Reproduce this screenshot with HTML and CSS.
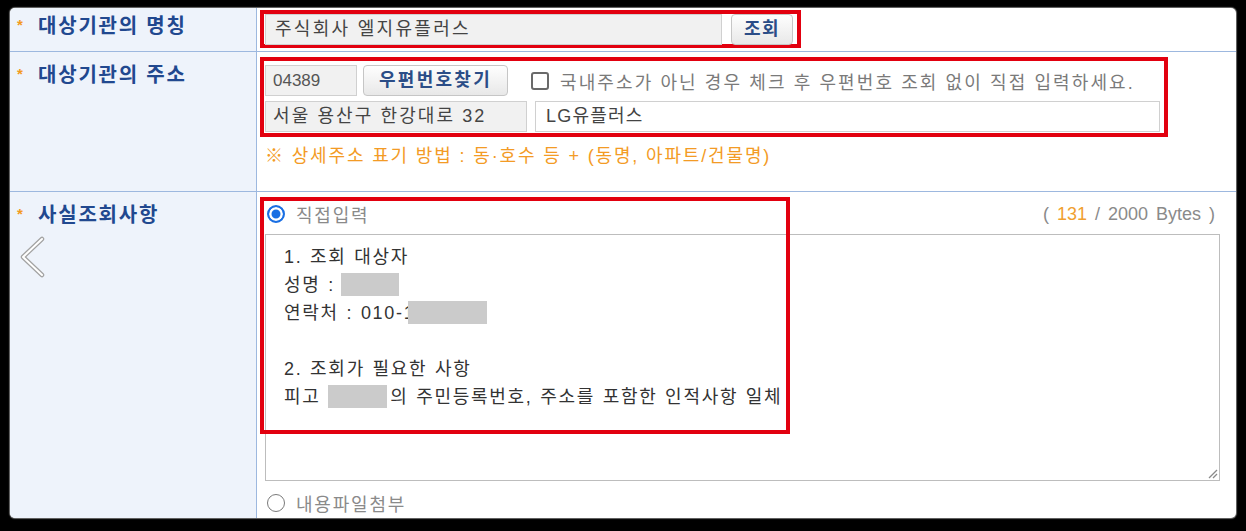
FILE: index.html
```html
<!DOCTYPE html>
<html lang="ko">
<head>
<meta charset="utf-8">
<title>사실조회</title>
<link rel="stylesheet" href="styles.css">
</head>
<body>
<div class="frame">
  <div class="row row-name">
    <div class="th th-name"><span class="star">*</span>대상기관의 명칭</div>
    <div class="td td-name">
      <div class="hl hl-name">
        <div class="inp inp-name">주식회사 엘지유플러스</div>
        <button class="btn btn-search">조회</button>
      </div>
    </div>
  </div>

  <div class="row row-addr">
    <div class="th"><span class="star">*</span>대상기관의 주소</div>
    <div class="td td-addr">
      <div class="hl hl-addr">
        <div class="line">
          <div class="inp inp-zip">04389</div>
          <button class="btn btn-zip">우편번호찾기</button>
          <span class="chk"></span>
          <span class="chk-label">국내주소가 아닌 경우 체크 후 우편번호 조회 없이 직접 입력하세요.</span>
        </div>
        <div class="line">
          <div class="inp inp-road">서울 용산구 한강대로 32</div>
          <div class="inp inp-detail">LG유플러스</div>
        </div>
      </div>
      <div class="note">※ 상세주소 표기 방법 : 동·호수 등 + (동명, 아파트/건물명)</div>
    </div>
  </div>

  <div class="row row-fact">
    <div class="th">
      <div><span class="star">*</span>사실조회사항</div>
      <svg class="chev" width="30" height="42" viewBox="0 0 30 42">
        <polyline points="24,3 5,21 24,39" fill="none" stroke="#a3a3a3" stroke-width="4.5" stroke-linecap="round" stroke-linejoin="round"/>
        <polyline points="24,3 5,21 24,39" fill="none" stroke="#ffffff" stroke-width="2" stroke-linecap="round" stroke-linejoin="round"/>
      </svg>
    </div>
    <div class="td td-fact">
      <div class="radio-line">
        <span class="radio on"></span>
        <span class="radio-label">직접입력</span>
        <span class="counter">( <b class="count">131</b> / 2000 Bytes )</span>
      </div>
      <div class="ta">
        <div>1. 조회 대상자</div>
        <div>성명 : <span class="redact r-name"></span></div>
        <div>연락처 : 010-1<span class="redact r-tel"></span></div>
        <div>&nbsp;</div>
        <div>2. 조회가 필요한 사항</div>
        <div>피고 <span class="redact r-def"></span>의 주민등록번호, 주소를 포함한 인적사항 일체</div>
        <svg class="grip" width="12" height="12" viewBox="0 0 12 12">
          <line x1="11" y1="3" x2="3" y2="11" stroke="#8a8a8a" stroke-width="1.2"/>
          <line x1="11" y1="7" x2="7" y2="11" stroke="#8a8a8a" stroke-width="1.2"/>
        </svg>
      </div>
      <div class="radio-line radio-line2">
        <span class="radio"></span>
        <span class="radio-label">내용파일첨부</span>
      </div>
      <div class="hl-overlay"></div>
    </div>
  </div>
</div>
</body>
</html>
```

FILE: styles.css
```css
html, body {
  margin: 0;
  padding: 0;
  background: #000;
}

body {
  font-family: "Liberation Sans", "Noto Sans CJK KR", sans-serif;
  height: 531px;
  overflow: hidden;
}

.frame {
  margin: 8px 10px 0 10px;
  width: 1226px;
  height: 510px;
  background: #fff;
  border-radius: 5px;
  overflow: hidden;
  display: flex;
  flex-direction: column;
  box-shadow: 0 0 1px 1px #6c6c6c;
}

.row {
  display: grid;
  grid-template-columns: 247px 1fr;
  border-bottom: 1px solid #9db8df;
  box-sizing: border-box;
}

.row-name { height: 44px; }
.row-addr { height: 140px; }
.row-fact { height: 326px; border-bottom: 0; }

.th {
  background: #eef3fb;
  border-right: 1px solid #9db8df;
  padding: 10px 0 0 7px;
  font-weight: bold;
  font-size: 20px;
  letter-spacing: 1.8px;
  color: #21488f;
  line-height: 26px;
  box-sizing: border-box;
}

.th-name { padding-top: 5px; }

.star {
  display: inline-block;
  width: 21px;
  color: #f39a1d;
  font-size: 15px;
  line-height: 24px;
  vertical-align: top;
  letter-spacing: 0;
}

.chev {
  display: block;
  margin: 8px 0 0 1px;
}

.td {
  position: relative;
  box-sizing: border-box;
}

.td-name { padding: 2px 0 0 3px; }
.td-addr { padding: 5px 0 0 3px; }
.td-fact { padding: 10px 16px 0 8px; }

.hl {
  border: 4px solid #e2000f;
  box-sizing: border-box;
}

.hl-name {
  display: inline-flex;
  align-items: center;
  gap: 9px;
  height: 38px;
  padding: 0 4px 0 1px;
}

.hl-addr {
  width: 908px;
  padding: 4px 4px 1px 1px;
  display: flex;
  flex-direction: column;
  gap: 5px;
}

.line {
  display: flex;
  align-items: center;
}

.inp {
  box-sizing: border-box;
  height: 31px;
  border: 1px solid #d0d0d0;
  background: #f1f1f1;
  font-size: 18px;
  letter-spacing: 2.3px;
  color: #444;
  padding-left: 9px;
  line-height: 29px;
  white-space: nowrap;
}

.inp-name { width: 457px; }
.inp-zip { width: 92px; font-size: 17px; color: #555; padding-left: 7px; letter-spacing: 0; }
.inp-road { width: 262px; padding-left: 7px; letter-spacing: 2.1px; }
.inp-detail { width: 625px; margin-left: 8px; background: #fff; padding-left: 10px; letter-spacing: 1.2px; }

.btn {
  height: 31px;
  box-sizing: border-box;
  border: 1px solid #c6c6c6;
  border-radius: 4px;
  background: linear-gradient(#fefefe, #e8e8e8);
  color: #2b4d87;
  font-weight: bold;
  font-size: 18px;
  font-family: inherit;
  padding: 0;
  letter-spacing: 0.6px;
  line-height: 29px;
}

.btn-search { width: 62px; letter-spacing: 1.5px; }
.btn-zip { width: 145px; margin-left: 6px; letter-spacing: 2.3px; }

.chk {
  width: 18px;
  height: 18px;
  border: 2px solid #6a6a6a;
  border-radius: 3px;
  margin-left: 23px;
  box-sizing: border-box;
  background: #fff;
}

.chk-label {
  margin-left: 11px;
  color: #7a7a7a;
  font-size: 18px;
  letter-spacing: 2.1px;
  white-space: nowrap;
}

.note {
  margin-top: 8px;
  padding-left: 5px;
  color: #f39b25;
  font-size: 18px;
  letter-spacing: 1.85px;
  line-height: 22px;
}

.radio-line {
  display: flex;
  align-items: center;
  height: 24px;
  margin-left: 2px;
}

.radio {
  width: 18px;
  height: 18px;
  border-radius: 50%;
  box-sizing: border-box;
  border: 1.5px solid #7a7a7a;
  background: #fff;
  flex: none;
}

.radio.on {
  border: 2px solid #1a6fe3;
  background: #1a6fe3;
  box-shadow: inset 0 0 0 2.5px #fff;
}

.radio-label {
  margin-left: 11px;
  color: #8a8a8a;
  font-size: 18px;
  letter-spacing: 1.8px;
}

.counter {
  margin-left: auto;
  margin-right: 5px;
  color: #8a8a8a;
  font-size: 18px;
  word-spacing: 3px;
}

.count {
  font-weight: normal;
  color: #f0a030;
}

.ta {
  position: relative;
  margin-top: 8px;
  height: 247px;
  box-sizing: border-box;
  border: 1px solid #bdbdbd;
  padding: 8px 0 0 18px;
  font-size: 18px;
  line-height: 28px;
  letter-spacing: 1.7px;
  word-spacing: 1px;
  color: #333;
}

.redact {
  display: inline-block;
  background: #cbcbcb;
  height: 23px;
  vertical-align: -5px;
}

.r-name { width: 58px; margin-left: -2px; }
.r-tel { width: 79px; margin-left: -7px; }
.r-def { width: 59px; margin-right: 3px; }

.grip {
  position: absolute;
  right: 1px;
  bottom: 1px;
}

.radio-line2 { margin-top: 10px; }

.hl-overlay {
  position: absolute;
  left: 3px;
  top: 5px;
  width: 530px;
  height: 237px;
  border: 4px solid #e2000f;
  box-sizing: border-box;
  pointer-events: none;
}
```
